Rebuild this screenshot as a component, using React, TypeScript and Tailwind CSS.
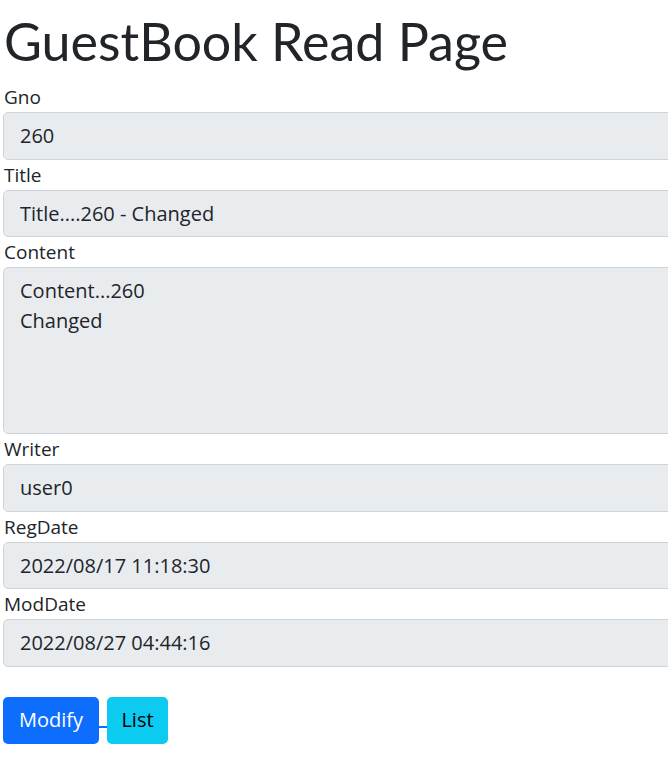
const fields: { label: string; value: string; rows?: number }[] = [
  { label: 'Gno', value: '260' },
  { label: 'Title', value: 'Title....260 - Changed' },
  { label: 'Content', value: 'Content...260\nChanged', rows: 5 },
  { label: 'Writer', value: 'user0' },
  { label: 'RegDate', value: '2022/08/17 11:18:30' },
  { label: 'ModDate', value: '2022/08/27 04:44:16' },
];

export default function App() {
  return (
    <div
      className="w-[668px] h-[778px] overflow-hidden bg-white text-[#212529] pl-[3px]"
      style={{ fontFamily: '"Open Sans", "Noto Sans CJK KR", sans-serif' }}
    >
      <h1
        className="text-[52px] leading-[72px] font-normal pt-[5px] mb-[5px] pl-[1px]"
        style={{ fontFamily: 'Lato, "Noto Sans CJK KR", sans-serif' }}
      >
        GuestBook Read Page
      </h1>

      {fields.map((f) => (
        <div key={f.label}>
          <label className="block text-[19px] leading-[30px] pl-[1px]">{f.label}</label>
          {f.rows ? (
            <textarea
              readOnly
              rows={f.rows}
              value={f.value}
              className="block w-[720px] h-[167px] resize-none bg-[#e9ecef] border border-[#ced4da] rounded-[5px] px-[16px] py-[8px] text-[20px] leading-[30px] outline-none"
            />
          ) : (
            <input
              readOnly
              value={f.value}
              className="block w-[720px] h-[47.5px] bg-[#e9ecef] border border-[#ced4da] rounded-[5px] px-[16px] text-[20px] outline-none"
            />
          )}
        </div>
      ))}

      <div className="flex mt-[30px]">
        <button className="h-[47.5px] w-[96px] bg-[#0d6efd] text-white text-[20px] rounded-[5px]">Modify</button>
        <div className="w-[8px] h-[2px] bg-[#0d6efd] mt-[29px]" />
        <button className="h-[47.5px] w-[61px] bg-[#0dcaf0] text-black text-[20px] rounded-[5px]">List</button>
      </div>
    </div>
  );
}
